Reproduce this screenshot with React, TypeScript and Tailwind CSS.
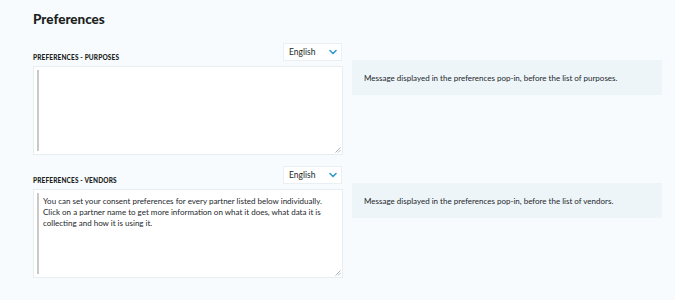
import React from 'react';

interface Section {
  id: string;
  label: string;
  value: string;
  help: string;
}

const sections: Section[] = [
  {
    id: 'purposes',
    label: 'Preferences - Purposes',
    value: '',
    help: 'Message displayed in the preferences pop-in, before the list of purposes.',
  },
  {
    id: 'vendors',
    label: 'Preferences - Vendors',
    value:
      'You can set your consent preferences for every partner listed below individually. Click on a partner name to get more information on what it does, what data it is collecting and how it is using it.',
    help: 'Message displayed in the preferences pop-in, before the list of vendors.',
  },
];

function Chevron() {
  return (
    <svg width="8" height="6" viewBox="0 0 8 6" className="text-[#2f9bd0]">
      <polyline points="1,1.5 4,4.5 7,1.5" fill="none" stroke="currentColor" strokeWidth="1.6" strokeLinecap="round" strokeLinejoin="round" />
    </svg>
  );
}

function ResizeGrip() {
  return (
    <svg width="6" height="6" viewBox="0 0 6 6" className="absolute right-[1px] bottom-[1px] text-gray-400">
      <line x1="0.5" y1="5.5" x2="5.5" y2="0.5" stroke="currentColor" strokeWidth="0.8" />
      <line x1="3" y1="5.5" x2="5.5" y2="3" stroke="currentColor" strokeWidth="0.8" />
    </svg>
  );
}

export default function App() {
  return (
    <div className="min-h-screen bg-[#f7fbfd] pl-[33px] pr-[13px] pt-[10px] text-[#23272b]" style={{ fontFamily: 'Lato, "Open Sans", sans-serif' }}>
      <h1 className="text-[13.5px] font-black leading-[18px] text-[#1c1f22]">Preferences</h1>

      <div className="mt-[15px] flex flex-col gap-[11px]">
        {sections.map((s) => (
          <div key={s.id} className="grid grid-cols-[310px_310px] gap-[9px]">
            {/* Editor */}
            <div>
              <div className="flex items-end justify-between">
                <span className="mb-[-1px] text-[6.5px] font-black uppercase leading-[8px] tracking-[0.15px] text-[#1c1f22]">
                  {s.label}
                </span>
                <div className="mr-[1px] flex h-[18px] w-[59px] items-center justify-between border border-[#e9f0f4] bg-white pl-[5px] pr-[4px]">
                  <span className="text-[8.5px] leading-none">English</span>
                  <Chevron />
                </div>
              </div>
              <div className="relative mt-[5px] h-[89px] border border-[#e6eef2] bg-white p-[3px]">
                <div className="h-full border-l-2 border-[#c9c9c9] pl-[4px] pt-[3px] text-[8px] leading-[11px]">
                  {s.value}
                </div>
                <ResizeGrip />
              </div>
            </div>

            {/* Help */}
            <div className="pt-[17px]">
              <div className="flex h-[35px] items-center bg-[#eef5f9] px-[12px] text-[8px]">
                {s.help}
              </div>
            </div>
          </div>
        ))}
      </div>
    </div>
  );
}
